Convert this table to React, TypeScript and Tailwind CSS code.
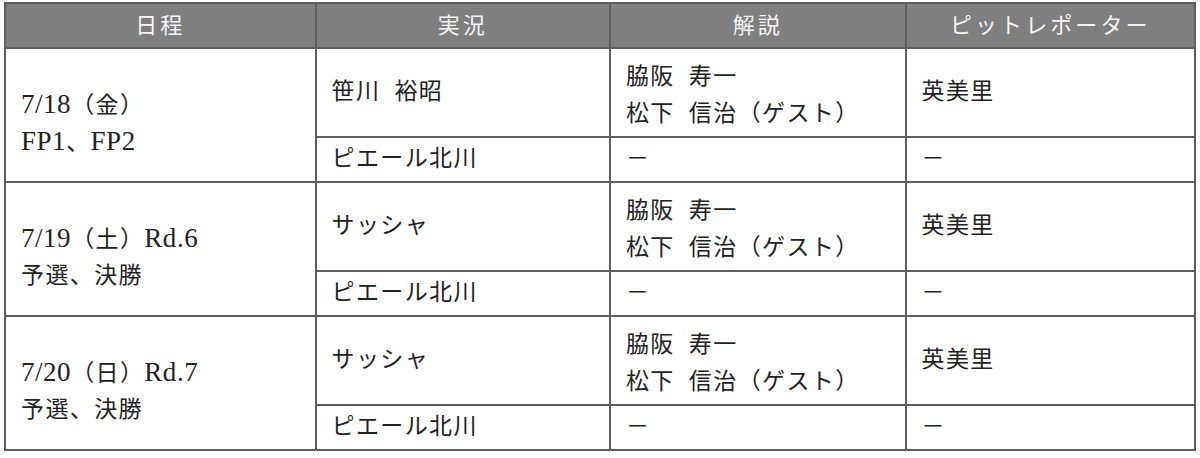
const font = { fontFamily: '"Liberation Serif", "Noto Sans CJK JP", serif' };

type Group = {
  day: string[];
  main: string;
  commentary: string[];
  reporter: string;
};

const groups: Group[] = [
  {
    day: ["7/18（金）", "FP1、FP2"],
    main: "笹川 裕昭",
    commentary: ["脇阪 寿一", "松下 信治（ゲスト）"],
    reporter: "英美里",
  },
  {
    day: ["7/19（土）Rd.6", "予選、決勝"],
    main: "サッシャ",
    commentary: ["脇阪 寿一", "松下 信治（ゲスト）"],
    reporter: "英美里",
  },
  {
    day: ["7/20（日）Rd.7", "予選、決勝"],
    main: "サッシャ",
    commentary: ["脇阪 寿一", "松下 信治（ゲスト）"],
    reporter: "英美里",
  },
];

// latin runs in the source font sit larger than the kana, so bump them
function Mixed({ text }: { text: string }) {
  return (
    <>
      {text.split(/([0-9A-Za-z./]+)/).map((part, i) =>
        /^[0-9A-Za-z./]+$/.test(part) ? (
          <span key={i} className="text-[27px] tracking-[0.02em]">
            {part}
          </span>
        ) : (
          <span key={i}>{part}</span>
        )
      )}
    </>
  );
}

const cell = "border-2 border-[#5e5e5e] align-middle text-left";
const head = "border-2 border-[#5e5e5e] font-normal text-[22px] text-[#f4f4f4] tracking-[0.14em]";

export default function App() {
  return (
    <div className="w-[1200px] h-[458px] bg-white pt-[2px] pl-[4px]" style={font}>
      <table className="w-[1192px] border-collapse text-[23px] text-[#222] tracking-[0.06em] [word-spacing:7px]">
        <colgroup>
          <col className="w-[311px]" />
          <col className="w-[295px]" />
          <col className="w-[296px]" />
          <col className="w-[290px]" />
        </colgroup>
        <thead>
          <tr className="h-[45px] bg-[#7f7f7f]">
            <th className={head}>日程</th>
            <th className={head}>実況</th>
            <th className={head}>解説</th>
            <th className={head}>ピットレポーター</th>
          </tr>
        </thead>
        <tbody>
          {groups.map((g, i) => (
            <>
              <tr key={`a${i}`} className="h-[89px]">
                <td rowSpan={2} className={`${cell} pl-[15px] pt-[16px]`}>
                  {g.day.map((l) => (
                    <div key={l} className="h-[37px] leading-[37px]">
                      <Mixed text={l} />
                    </div>
                  ))}
                </td>
                <td className={`${cell} pl-[15px]`}>{g.main}</td>
                <td className={`${cell} pl-[15px] pt-[4px]`}>
                  {g.commentary.map((l) => (
                    <div key={l} className="h-[37px] leading-[37px]">
                      {l}
                    </div>
                  ))}
                </td>
                <td className={`${cell} pl-[15px]`}>{g.reporter}</td>
              </tr>
              <tr key={`b${i}`} className="h-[45px]">
                <td className={`${cell} pl-[15px]`}>ピエール北川</td>
                <td className={`${cell} pl-[15px]`}>－</td>
                <td className={`${cell} pl-[15px]`}>－</td>
              </tr>
            </>
          ))}
        </tbody>
      </table>
    </div>
  );
}
